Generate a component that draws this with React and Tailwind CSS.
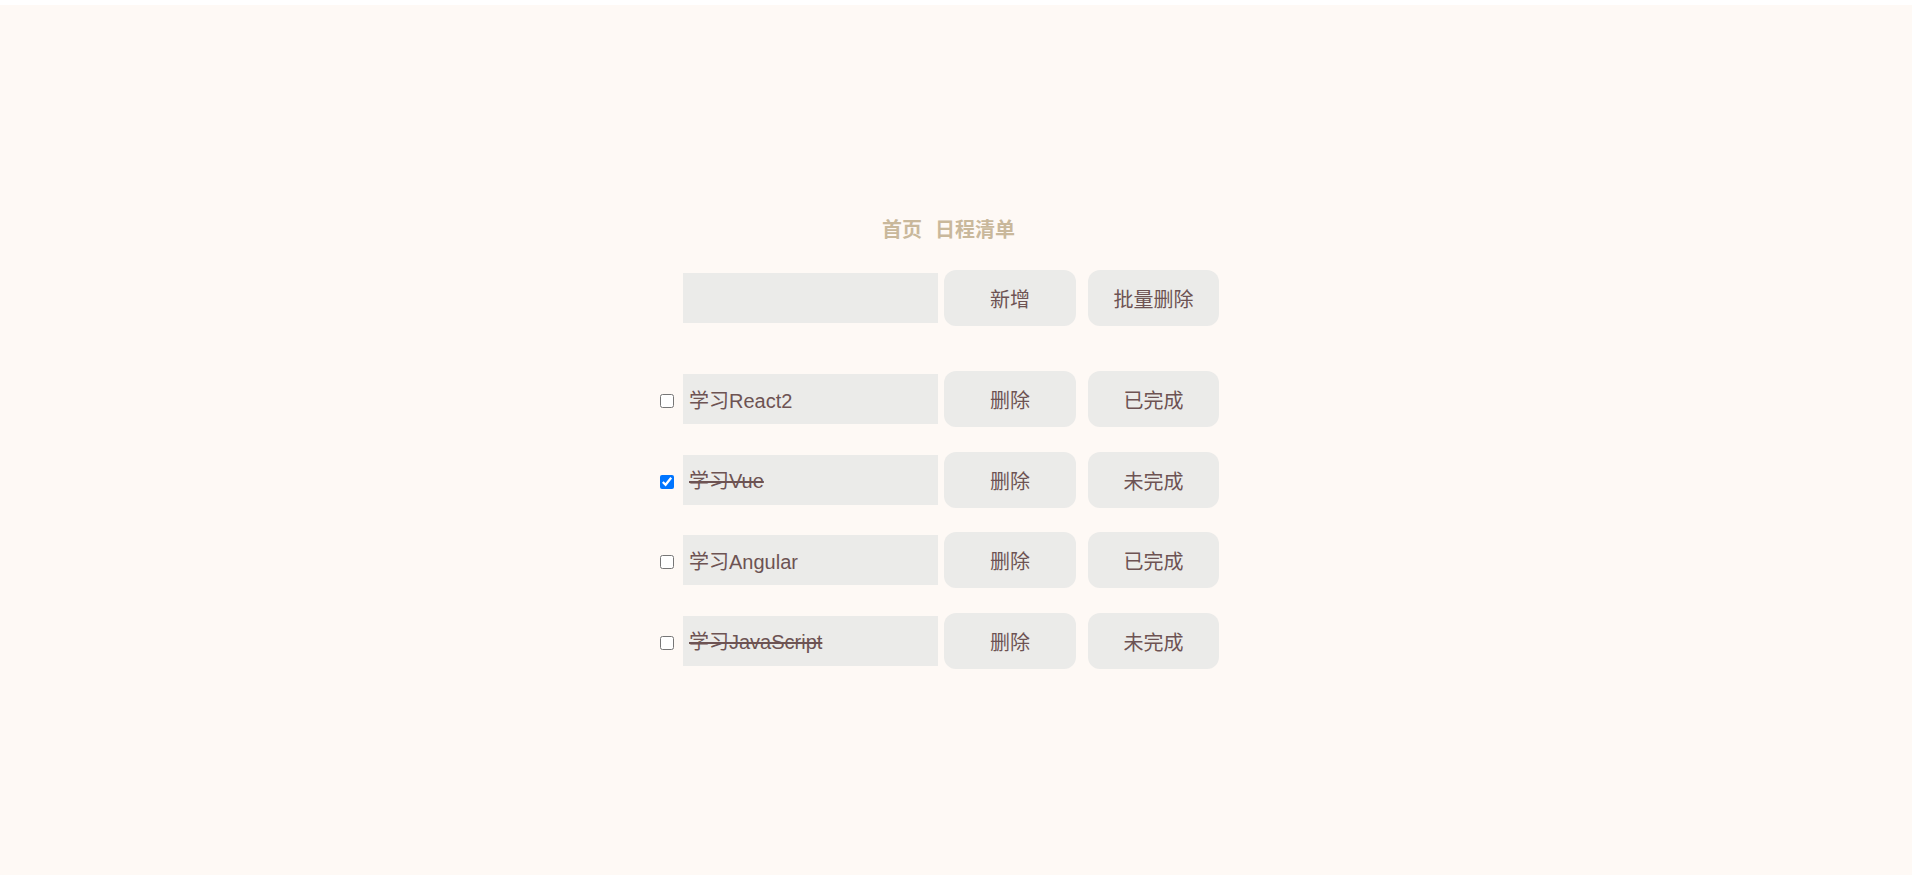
import React, { useState } from "react";

const font = { fontFamily: '"Liberation Sans", Arial, "Noto Sans CJK SC", sans-serif' };

const initial = [
  { id: 1, text: "学习React2", checked: false, done: false },
  { id: 2, text: "学习Vue", checked: true, done: true },
  { id: 3, text: "学习Angular", checked: false, done: false },
  { id: 4, text: "学习JavaScript", checked: false, done: true },
];

function Btn({ children, w }) {
  return (
    <button
      className={`h-[56px] ${w} rounded-[12px] bg-[#ebebe9] pt-[4px] text-[20px] text-[#6d5353] cursor-pointer`}
      style={font}
    >
      {children}
    </button>
  );
}

export default function App() {
  const [items, setItems] = useState(initial);
  return (
    <div className="bg-white pt-[5px]" style={font}>
      <div className="min-h-[870px] bg-[#fef9f5] pt-[212px]">
        <div className="mx-auto w-[592px]">
          <div className="h-[27px] pl-[222px] text-[20px] font-bold leading-[27px] text-[#c9b89b]">
            <span>首页</span>
            <span className="ml-[13px]">日程清单</span>
          </div>

          <div className="mt-[26px] flex h-[56px] items-center">
            <div className="w-[23px]" />
            <input
              className="h-[50px] w-[255px] bg-[#ebebe9] px-[6px] text-[20px] text-[#6d5353] outline-none"
              style={font}
              defaultValue=""
            />
            <div className="ml-[6px]">
              <Btn w="w-[132px]">新增</Btn>
            </div>
            <div className="ml-[12px]">
              <Btn w="w-[131px]">批量删除</Btn>
            </div>
          </div>

          <div className="mt-[45px] flex flex-col gap-[24.5px]">
            {items.map((it) => (
              <div key={it.id} className="flex h-[56px] items-center">
                <div className="flex w-[23px] items-center pt-[4px]">
                  <input
                    type="checkbox"
                    className="h-[14px] w-[14px]"
                    checked={it.checked}
                    onChange={() =>
                      setItems(items.map((x) => (x.id === it.id ? { ...x, checked: !x.checked } : x)))
                    }
                  />
                </div>
                <input
                  readOnly
                  value={it.text}
                  className={`h-[50px] w-[255px] bg-[#ebebe9] px-[6px] text-[20px] text-[#6d5353] outline-none ${
                    it.done ? "line-through" : ""
                  }`}
                  style={font}
                />
                <div className="ml-[6px]">
                  <Btn w="w-[132px]">删除</Btn>
                </div>
                <div className="ml-[12px]">
                  <Btn w="w-[131px]">{it.done ? "未完成" : "已完成"}</Btn>
                </div>
              </div>
            ))}
          </div>
        </div>
      </div>
    </div>
  );
}
